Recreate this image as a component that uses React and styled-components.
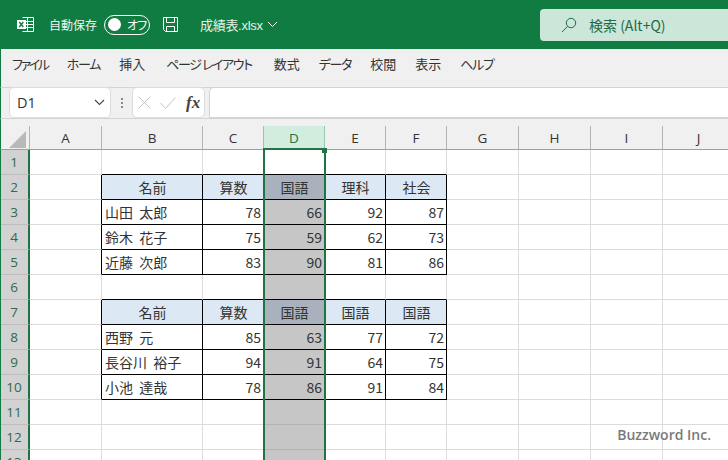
import React from 'react';
import styled, { createGlobalStyle } from 'styled-components';

const GREEN = '#107c41';
const SEL = '#217346';
const COLS = ['A', 'B', 'C', 'D', 'E', 'F', 'G', 'H', 'I', 'J'];
const WIDTHS = '72px 101px 61px 61px 61px 61px 72px 72px 72px 72px';
const ROW_COUNT = 13;
const MENUS = [
  { label: 'ファイル', track: -2.3, after: 0 },
  { label: 'ホーム', track: -1.3, after: 0 },
  { label: '挿入', track: 0, after: 2 },
  { label: 'ページ レイアウト', track: -1.4, after: 3 },
  { label: '数式', track: 0, after: 0 },
  { label: 'データ', track: -1.3, after: 0 },
  { label: '校閲', track: 0, after: 0 },
  { label: '表示', track: 0, after: 0 },
  { label: 'ヘルプ', track: -1.3, after: 0 },
];

// 表の中身 (列 B-F)
const TABLES = {
  2: ['名前', '算数', '国語', '理科', '社会'],
  3: ['山田 太郎', 78, 66, 92, 87],
  4: ['鈴木 花子', 75, 59, 62, 73],
  5: ['近藤 次郎', 83, 90, 81, 86],
  7: ['名前', '算数', '国語', '国語', '国語'],
  8: ['西野 元', 85, 63, 77, 72],
  9: ['長谷川 裕子', 94, 91, 64, 75],
  10: ['小池 達哉', 78, 86, 91, 84],
};
const HEAD_ROWS = [2, 7];

const inTable = (r, c) => Boolean(TABLES[r]) && c >= 1 && c <= 5;

const Global = createGlobalStyle`
  * { box-sizing: border-box; }
  html, body { margin: 0; padding: 0; background: #fff; }
  body { font-family: "Noto Sans CJK JP", "Liberation Sans", sans-serif; }
`;

const Window = styled.div`
  position: relative;
  width: 728px;
  height: 460px;
  overflow: hidden;
  display: flex;
  flex-direction: column;
`;

const TitleBar = styled.div`
  height: 49px;
  flex: none;
  background: ${GREEN};
  color: #fff;
  display: flex;
  align-items: center;
  padding-left: 17px;
`;

const AutoSave = styled.span`
  font-size: 12px;
  margin-left: 15px;
  color: #eef6f1;
`;

const Toggle = styled.div`
  width: 46px;
  height: 20px;
  margin-left: 7px;
  border: 1px solid #fff;
  border-radius: 10px;
  display: flex;
  align-items: center;
  padding-left: 3px;
  font-size: 12px;
  font-feature-settings: "palt";
  letter-spacing: -1px;
  gap: 6px;
  line-height: 1;
  white-space: nowrap;
`;

const Knob = styled.span`
  width: 13px;
  height: 13px;
  border-radius: 50%;
  background: #fff;
  flex: none;
`;

const SaveIcon = styled.svg`
  margin-left: 12px;
`;

const FileName = styled.div`
  margin-left: 21px;
  font-family: "Liberation Sans", "Noto Sans CJK JP", sans-serif;
  font-size: 13px;
  letter-spacing: -0.3px;
  display: flex;
  align-items: center;
  gap: 4px;
  color: #e4f1ea;
`;

const SearchBox = styled.div`
  margin-left: auto;
  margin-top: 1px;
  width: 188px;
  height: 32px;
  background: #cce6d9;
  border-radius: 4px 0 0 4px;
  display: flex;
  align-items: center;
  gap: 12px;
  padding-left: 21px;
  font-size: 14px;
  color: #1f6b47;
`;

const MenuBar = styled.div`
  height: 39px;
  flex: none;
  background: #f0f0f0;
  border-left: 1px solid ${GREEN};
  border-bottom: 1px solid #d4d4d4;
  display: flex;
  align-items: center;
  gap: 19px;
  padding: 0 0 9px 11px;
  font-size: 13px;
  font-feature-settings: "palt";
  color: #333;
`;

const MenuItem = styled.span`
  letter-spacing: ${(p) => p.$track}px;
  margin-right: ${(p) => p.$after}px;
`;

const FormulaBar = styled.div`
  height: 30px;
  flex: none;
  background: #f0f0f0;
  border-left: 1px solid ${GREEN};
  display: flex;
  align-items: flex-start;
  padding-left: 8px;
`;

const NameBox = styled.div`
  width: 102px;
  height: 31px;
  margin-top: -1px;
  background: #fff;
  border: 1px solid #dcdcdc;
  border-radius: 5px;
  display: flex;
  align-items: center;
  justify-content: space-between;
  padding: 0 5px 0 7px;
  font-family: "Open Sans", "Liberation Sans", sans-serif;
  font-size: 14.5px;
  color: #333;
`;

const Grip = styled.div`
  width: 21px;
  height: 29px;
  display: flex;
  flex-direction: column;
  align-items: center;
  justify-content: center;
  gap: 2px;
`;

const GripDot = styled.span`
  width: 2px;
  height: 2px;
  background: #8a8a8a;
`;

const FxBox = styled.div`
  width: 73px;
  height: 31px;
  margin-top: -1px;
  background: #fff;
  border: 1px solid #dcdcdc;
  border-radius: 5px;
  display: flex;
  align-items: center;
  gap: 9px;
  padding-left: 5px;
`;

const FxLabel = styled.span`
  font-family: "Liberation Serif", serif;
  font-style: italic;
  font-weight: 700;
  font-size: 17px;
  color: #444;
  margin-left: 1px;
`;

const FormulaInput = styled.div`
  flex: 1;
  height: 31px;
  margin-top: -1px;
  margin-left: 4px;
  background: #fff;
  border: 1px solid #d4d4d4;
  border-right: 0;
  border-radius: 5px 0 0 0;
`;

const HeaderRow = styled.div`
  height: 32px;
  flex: none;
  background: #f0f0f0;
  border-top: 1px solid #d4d4d4;
  border-left: 1px solid ${GREEN};
  border-bottom: 1px solid #9f9f9f;
  padding-top: 7px;
  display: grid;
  grid-template-columns: 29px ${WIDTHS};
`;

const Corner = styled.div`
  position: relative;
  border-right: 1px solid #b5b5b5;
`;

const CornerMark = styled.svg`
  position: absolute;
  left: 8px;
  top: 5px;
`;

const ColHead = styled.div`
  display: flex;
  align-items: center;
  justify-content: center;
  font-family: "Open Sans", "Liberation Sans", sans-serif;
  font-size: 13.5px;
  border-right: 1px solid ${(p) => (p.$active ? '#9cc7b0' : '#b5b5b5')};
  background: ${(p) => (p.$active ? '#d2ecdd' : 'transparent')};
  color: ${(p) => (p.$active ? SEL : '#333')};
`;

const Sheet = styled.div`
  position: relative;
  flex: 1;
  border-left: 1px solid ${GREEN};
  background: #fff;
  display: grid;
  grid-template-columns: 29px ${WIDTHS};
  grid-auto-rows: 25px;
`;

const RowHead = styled.div`
  background: #d2d2d2;
  border-right: 2px solid ${SEL};
  border-bottom: 1px solid #bdbdbd;
  display: flex;
  align-items: center;
  justify-content: center;
  font-family: "Open Sans", "Liberation Sans", sans-serif;
  font-size: 13.5px;
  color: #2f6a4b;
  padding-right: 1px;
`;

const Cell = styled.div`
  display: flex;
  align-items: center;
  padding: 0 2px 0 3px;
  font-size: 14px;
  word-spacing: 3px;
  color: #333;
  white-space: nowrap;
  overflow: hidden;
  justify-content: ${(p) => (p.$head ? 'center' : p.$num ? 'flex-end' : 'flex-start')};
  background: ${(p) => p.$bg};
  border-right: 1px solid ${(p) => p.$right};
  border-bottom: 1px solid ${(p) => p.$bottom};
`;

const Selection = styled.div`
  position: absolute;
  left: 262px;
  top: -2px;
  bottom: 0;
  width: 63px;
  border: 2px solid ${SEL};
  border-bottom: 0;
  pointer-events: none;
`;

const Handle = styled.span`
  position: absolute;
  right: -3px;
  top: -2px;
  width: 5px;
  height: 5px;
  background: ${SEL};
`;

const Watermark = styled.div`
  position: absolute;
  right: 17px;
  top: 425px;
  font-family: "Open Sans", "Liberation Sans", sans-serif;
  font-size: 14px;
  font-weight: 600;
  color: #7a7a7a;
  text-shadow: 0 0 2px #fff;
`;

function cellProps(r, c) {
  const selected = c === 3 && r > 1;
  const head = inTable(r, c) && HEAD_ROWS.includes(r);
  const black = inTable(r, c);
  const bottomBlack = black || inTable(r + 1, c);
  const rightBlack = black || inTable(r, c + 1);
  const grid = selected ? '#b4b4b4' : '#dcdcdc';
  let bg = '#fff';
  if (selected) bg = head ? '#a8b1bc' : '#c6c6c6';
  else if (head) bg = '#dce9f5';
  return {
    $bg: bg,
    $head: head,
    $right: rightBlack ? '#000' : grid,
    $bottom: bottomBlack ? '#000' : grid,
  };
}

function ExcelIcon() {
  return (
    <svg width="17" height="17" viewBox="0 0 17 17" fill="none">
      <path d="M5.5 1.5h11v14h-11M5.5 5.5h11M5.5 8.5h11M5.5 11.5h11M10.5 1.5v14" stroke="#fff" strokeWidth="1" />
      <rect x="0" y="4" width="9" height="9" fill="#fff" />
      <path d="M2.3 6l4 5M6.3 6l-4 5" stroke={GREEN} strokeWidth="1.4" />
    </svg>
  );
}

function SaveGlyph() {
  return (
    <SaveIcon width="17" height="17" viewBox="0 0 17 17" fill="none" stroke="#fff" strokeWidth="1">
      <path d="M1.5 1.5h14v14h-12l-2-2z" />
      <path d="M4.5 1.5v5h8v-5M4.5 15.5v-5h8v5" />
    </SaveIcon>
  );
}

export default function App() {
  const rows = Array.from({ length: ROW_COUNT }, (_, i) => i + 1);

  return (
    <Window>
      <Global />
      <TitleBar>
        <ExcelIcon />
        <AutoSave>自動保存</AutoSave>
        <Toggle>
          <Knob />
          オフ
        </Toggle>
        <SaveGlyph />
        <FileName>
          成績表.xlsx
          <svg width="11" height="7" viewBox="0 0 11 7" fill="none" stroke="#fff" strokeWidth="1">
            <path d="M1 1l4.5 4.5L10 1" />
          </svg>
        </FileName>
        <SearchBox>
          <svg width="16" height="16" viewBox="0 0 16 16" fill="none" stroke="#1f6b47" strokeWidth="1">
            <circle cx="10" cy="6" r="4.7" />
            <path d="M6.6 9.4L1 15" />
          </svg>
          検索 (Alt+Q)
        </SearchBox>
      </TitleBar>

      <MenuBar>
        {MENUS.map((m) => (
          <MenuItem key={m.label} $track={m.track} $after={m.after}>
            {m.label}
          </MenuItem>
        ))}
      </MenuBar>

      <FormulaBar>
        <NameBox>
          D1
          <svg width="11" height="7" viewBox="0 0 11 7" fill="none" stroke="#444" strokeWidth="1.1">
            <path d="M1 1l4.5 4.5L10 1" />
          </svg>
        </NameBox>
        <Grip>
          <GripDot />
          <GripDot />
          <GripDot />
        </Grip>
        <FxBox>
          <svg width="13" height="13" viewBox="0 0 13 13" fill="none" stroke="#c4c4c4" strokeWidth="1">
            <path d="M.5.5l12 12M12.5.5l-12 12" />
          </svg>
          <svg width="16" height="12" viewBox="0 0 16 12" fill="none" stroke="#c4c4c4" strokeWidth="1">
            <path d="M.5 6l5 5.5L15.5.5" />
          </svg>
          <FxLabel>fx</FxLabel>
        </FxBox>
        <FormulaInput />
      </FormulaBar>

      <HeaderRow>
        <Corner>
          <CornerMark width="17" height="17" viewBox="0 0 17 17">
            <path d="M17 0v17H0z" fill="#b9b9b9" />
          </CornerMark>
        </Corner>
        {COLS.map((c) => (
          <ColHead key={c} $active={c === 'D'}>
            {c}
          </ColHead>
        ))}
      </HeaderRow>

      <Sheet>
        {rows.map((r) => (
          <React.Fragment key={r}>
            <RowHead>{r}</RowHead>
            {COLS.map((_, c) => {
              const value = inTable(r, c) ? TABLES[r][c - 1] : '';
              return (
                <Cell key={c} {...cellProps(r, c)} $num={typeof value === 'number'}>
                  {value}
                </Cell>
              );
            })}
          </React.Fragment>
        ))}
        <Selection>
          <Handle />
        </Selection>
      </Sheet>

      <Watermark>Buzzword Inc.</Watermark>
    </Window>
  );
}
